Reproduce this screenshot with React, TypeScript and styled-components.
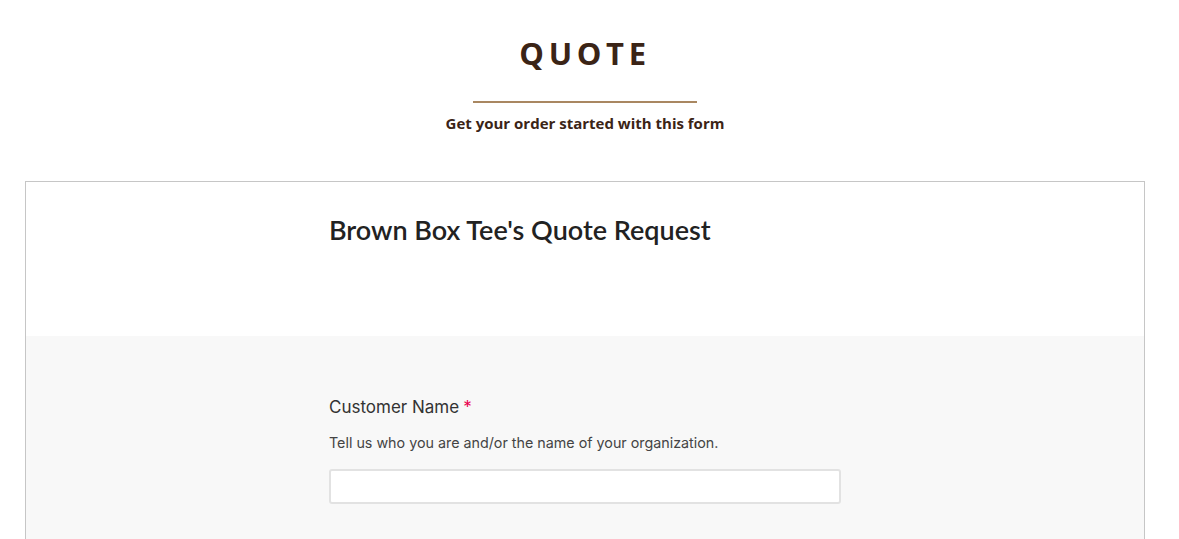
import React from 'react';
import styled, { createGlobalStyle } from 'styled-components';

const GlobalStyle = createGlobalStyle`
  body {
    margin: 0;
    background: #fff;
    font-family: "Open Sans", "Liberation Sans", sans-serif;
  }
`;

const Page = styled.div`
  display: flex;
  flex-direction: column;
  align-items: center;
  padding: 34px 9px 0 0;
`;

const Heading = styled.h1`
  margin: 0;
  font-family: "Open Sans", sans-serif;
  font-size: 31px;
  font-weight: 700;
  letter-spacing: 0.15em;
  color: #3b2416;
  line-height: 38px;
`;

const Divider = styled.div`
  width: 224px;
  height: 2px;
  background: #a98761;
  margin-top: 29px;
`;

const Subtitle = styled.p`
  margin: 10px 0 0;
  font-size: 15px;
  font-weight: 700;
  color: #3b2416;
  line-height: 20px;
`;

const Frame = styled.div`
  align-self: stretch;
  margin: 48px 25px 0 25px;
  border: 1px solid #c6c6c6;
  border-bottom: none;
  height: 400px;
  display: flex;
  flex-direction: column;
`;

const Header = styled.div`
  background: #fff;
  height: 154px;
  display: flex;
  justify-content: center;
`;

const Body = styled.div`
  flex: 1;
  background: #f8f8f8;
  display: flex;
  justify-content: center;
`;

const Column = styled.div`
  width: 512px;
`;

const FormTitle = styled.h2`
  margin: 31px 0 0;
  font-family: "Lato", sans-serif;
  font-size: 27px;
  font-weight: 600;
  color: #222;
  line-height: 34px;
`;

const Field = styled.div`
  padding-top: 59px;
  display: flex;
  flex-direction: column;
`;

const Label = styled.label`
  font-family: "Inter", sans-serif;
  font-size: 17px;
  color: #333;
  line-height: 24px;
`;

const Required = styled.span`
  color: #e8004e;
  margin-left: 4px;
`;

const Help = styled.p`
  margin: 14px 0 0;
  font-family: "Inter", sans-serif;
  font-size: 14.3px;
  color: #444;
  line-height: 20px;
`;

const TextInput = styled.input`
  margin-top: 16px;
  box-sizing: border-box;
  width: 512px;
  height: 35px;
  border: 2px solid #e2e2e2;
  border-radius: 3px;
  background: #fff;
  padding: 0 8px;
  font-size: 15px;
  outline: none;
`;

const App: React.FC = () => {
  return (
    <>
      <GlobalStyle />
      <Page>
        <Heading>QUOTE</Heading>
        <Divider />
        <Subtitle>Get your order started with this form</Subtitle>
        <Frame>
          <Header>
            <Column>
              <FormTitle>Brown Box Tee's Quote Request</FormTitle>
            </Column>
          </Header>
          <Body>
            <Column>
              <Field>
                <Label>
                  Customer Name<Required>*</Required>
                </Label>
                <Help>Tell us who you are and/or the name of your organization.</Help>
                <TextInput type="text" />
              </Field>
            </Column>
          </Body>
        </Frame>
      </Page>
    </>
  );
};

export default App;
